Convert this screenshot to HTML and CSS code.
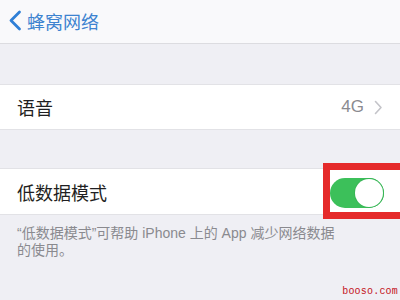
FILE: index.html
```html
<!DOCTYPE html>
<html lang="zh">
<head>
<meta charset="utf-8">
<link rel="stylesheet" href="styles.css">
</head>
<body>
<div class="screen">
  <header class="nav">
    <svg class="back" width="14" height="21" viewBox="0 0 14 21"><path d="M11.5 2 L3 10.5 L11.5 19" fill="none" stroke="#2f7fd6" stroke-width="2.8" stroke-linecap="round" stroke-linejoin="round"/></svg>
    <span class="nav-title">蜂窝网络</span>
  </header>
  <div class="gap gap1"></div>
  <div class="row row1">
    <span class="label">语音</span>
    <span class="value">4G</span>
    <svg class="chev" width="9" height="15" viewBox="0 0 9 15"><path d="M1.5 1.5 L7 7.5 L1.5 13.5" fill="none" stroke="#c4c4c9" stroke-width="1.6" stroke-linecap="round" stroke-linejoin="round"/></svg>
  </div>
  <div class="gap gap2"></div>
  <div class="row row2">
    <span class="label">低数据模式</span>
    <div class="toggle"><div class="knob"></div></div>
    <div class="redbox"></div>
  </div>
  <div class="footer">
    <p class="note"><span class="line">“低数据模式”可帮助 iPhone 上的 App 减少网络数据</span><span class="line">的使用。</span></p>
  </div>
  <div class="wm">booso.com</div>
</div>
</body>
</html>
```
FILE: styles.css
```css
* { box-sizing: border-box; margin: 0; padding: 0; }
html, body { width: 400px; height: 300px; overflow: hidden; }
body { background: #efeff4; font-family: "Noto Sans CJK SC", "Liberation Sans", sans-serif; }
.screen { position: relative; width: 400px; height: 300px; display: flex; flex-direction: column; }
.nav { height: 44px; background: #f9f9fb; border-bottom: 1px solid #dcdce0; display: flex; align-items: center; padding-left: 8px; gap: 5px; }
.back { flex: none; margin-top: -2px; }
.nav-title { font-size: 18px; color: #3d83d0; line-height: 1; margin-top: -2px; }
.gap1 { height: 40px; }
.gap2 { height: 38px; }
.row { position: relative; background: #fff; border-top: 1px solid #e2e2e6; border-bottom: 1px solid #e2e2e6; display: flex; align-items: center; padding: 0 17px; }
.row1 { height: 46px; }
.row2 { height: 47px; padding-right: 16px; }
.label { font-size: 18px; color: #1f1f22; flex: 1; line-height: 1; }
.value { font-size: 17px; color: #8a8a8f; font-family: "Liberation Sans", sans-serif; margin-right: 10px; }
.chev { flex: none; }
.toggle { width: 54px; height: 30px; border-radius: 15px; background: #3cc05a; position: relative; margin-top: 2px; }
.knob { position: absolute; right: 1px; top: 1px; width: 28px; height: 28px; border-radius: 50%; background: #fff; box-shadow: 0 0 0 1px #38b556; }
.redbox { position: absolute; left: 323px; top: -6px; width: 84px; height: 56px; border: 7px solid #e52a2a; }
.footer { padding: 10px 17px 0; }
.note { font-family: "Liberation Sans", "Noto Sans CJK SC", sans-serif; font-size: 14px; color: #8a8a8f; }
.line { display: block; height: 17px; line-height: 17px; overflow: visible; }
.wm { position: absolute; right: 2px; bottom: 3px; font-family: "Liberation Mono", monospace; font-size: 10px; color: #c4141c; letter-spacing: 0.2px; }
```
